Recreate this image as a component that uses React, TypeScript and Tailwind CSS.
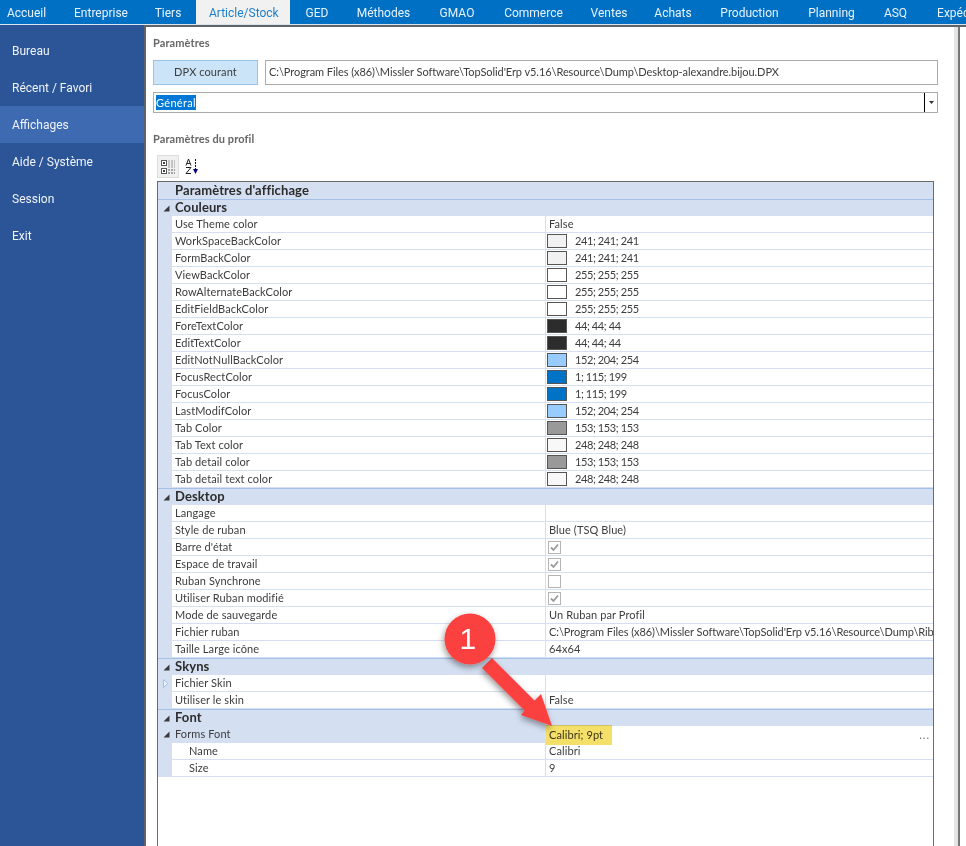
const tabs = [
  { label: 'Accueil', width: 'w-[39px]' },
  { label: 'Entreprise', width: 'w-[52px]' },
  { label: 'Tiers', width: 'w-[24px]' },
  { label: 'Article/Stock', width: 'w-[68px]', active: true },
  { label: 'GED', width: 'w-[22px]' },
  { label: 'Méthodes', width: 'w-[53px]' },
  { label: 'GMAO', width: 'w-[36px]' },
  { label: 'Commerce', width: 'w-[59px]' },
  { label: 'Ventes', width: 'w-[34px]' },
  { label: 'Achats', width: 'w-[36px]' },
  { label: 'Production', width: 'w-[59px]' },
  { label: 'Planning', width: 'w-[47px]' },
  { label: 'ASQ', width: 'w-[23px]' },
  { label: 'Expédition', width: 'w-[58px]' },
];
const menu = ['Bureau', 'Récent / Favori', 'Affichages', 'Aide / Système', 'Session', 'Exit'];

type Row =
  | { kind: 'group'; label: string; line?: boolean }
  | { kind: 'text'; label: string; value?: string; indent?: boolean; marker?: boolean; tight?: boolean }
  | { kind: 'color'; label: string; value: string; swatch: string }
  | { kind: 'check'; label: string; checked: boolean }
  | { kind: 'font'; label: string; value: string };

const rows: Row[] = [
  { kind: 'group', label: "Paramètres d'affichage" },
  { kind: 'group', label: 'Couleurs', line: true },
  { kind: 'text', label: 'Use Theme color', value: 'False' },
  { kind: 'color', label: 'WorkSpaceBackColor', value: '241; 241; 241', swatch: 'bg-[#f1f1f1]' },
  { kind: 'color', label: 'FormBackColor', value: '241; 241; 241', swatch: 'bg-[#f1f1f1]' },
  { kind: 'color', label: 'ViewBackColor', value: '255; 255; 255', swatch: 'bg-white' },
  { kind: 'color', label: 'RowAlternateBackColor', value: '255; 255; 255', swatch: 'bg-white' },
  { kind: 'color', label: 'EditFieldBackColor', value: '255; 255; 255', swatch: 'bg-white' },
  { kind: 'color', label: 'ForeTextColor', value: '44; 44; 44', swatch: 'bg-[#2c2c2c]' },
  { kind: 'color', label: 'EditTextColor', value: '44; 44; 44', swatch: 'bg-[#2c2c2c]' },
  { kind: 'color', label: 'EditNotNullBackColor', value: '152; 204; 254', swatch: 'bg-[#98ccfe]' },
  { kind: 'color', label: 'FocusRectColor', value: '1; 115; 199', swatch: 'bg-[#0173c7]' },
  { kind: 'color', label: 'FocusColor', value: '1; 115; 199', swatch: 'bg-[#0173c7]' },
  { kind: 'color', label: 'LastModifColor', value: '152; 204; 254', swatch: 'bg-[#98ccfe]' },
  { kind: 'color', label: 'Tab Color', value: '153; 153; 153', swatch: 'bg-[#999999]' },
  { kind: 'color', label: 'Tab Text color', value: '248; 248; 248', swatch: 'bg-[#f8f8f8]' },
  { kind: 'color', label: 'Tab detail color', value: '153; 153; 153', swatch: 'bg-[#999999]' },
  { kind: 'color', label: 'Tab detail text color', value: '248; 248; 248', swatch: 'bg-[#f8f8f8]' },
  { kind: 'group', label: 'Desktop', line: true },
  { kind: 'text', label: 'Langage' },
  { kind: 'text', label: 'Style de ruban', value: 'Blue (TSQ Blue)' },
  { kind: 'check', label: "Barre d'état", checked: true },
  { kind: 'check', label: 'Espace de travail', checked: true },
  { kind: 'check', label: 'Ruban Synchrone', checked: false },
  { kind: 'check', label: 'Utiliser Ruban modifié', checked: true },
  { kind: 'text', label: 'Mode de sauvegarde', value: 'Un Ruban par Profil' },
  { kind: 'text', label: 'Fichier ruban', tight: true, value: "C:\\Program Files (x86)\\Missler Software\\TopSolid'Erp v5.16\\Resource\\Dump\\Ribbon-alexandre.bijou.xml" },
  { kind: 'text', label: 'Taille Large icône', value: '64x64' },
  { kind: 'group', label: 'Skyns', line: true },
  { kind: 'text', label: 'Fichier Skin', marker: true },
  { kind: 'text', label: 'Utiliser le skin', value: 'False' },
  { kind: 'group', label: 'Font', line: true },
  { kind: 'font', label: 'Forms Font', value: 'Calibri; 9pt' },
  { kind: 'text', label: 'Name', value: 'Calibri', indent: true },
  { kind: 'text', label: 'Size', value: '9', indent: true },
];

function Expander() {
  return (
    <svg width="7" height="7" viewBox="0 0 7 7" className="absolute left-[5px] top-[5px]">
      <path d="M6.5 0.5V6.5H0.5Z" fill="#3a3a3a" />
    </svg>
  );
}

function Check({ checked }: { checked: boolean }) {
  return (
    <div className="ml-[-1px] w-[13px] h-[13px] border border-[#b4b4b4] bg-white flex items-center justify-center">
      {checked && (
        <svg width="11" height="11" viewBox="0 0 11 11">
          <path d="M2 5.5L4.5 8L9 2.5" fill="none" stroke="#9a9a9a" strokeWidth="1.8" />
        </svg>
      )}
    </div>
  );
}

function GridRow({ row }: { row: Row }) {
  if (row.kind === 'group') {
    return (
      <div className={`relative h-[17px] shrink-0 bg-[#d4dff1] pl-[17px] font-bold text-[13px] text-[#2c2c2c] ${row.line ? 'border-t border-[#a5c0e6] leading-[15px]' : 'leading-[16px]'}`}>
        {row.line && <Expander />}
        {row.label}
      </div>
    );
  }
  const isFont = row.kind === 'font';
  return (
    <div className="flex h-[17px] shrink-0">
      <div className="relative w-[14px] shrink-0 bg-[#d4dff1]">
        {isFont && <Expander />}
        {row.kind === 'text' && row.marker && (
          <svg width="6" height="9" viewBox="0 0 6 9" className="absolute left-[5px] top-[4px]">
            <path d="M0.5 0.5L5 4.5L0.5 8.5Z" fill="#eaf2fd" stroke="#a5c0e6" />
          </svg>
        )}
      </div>
      <div className={`w-[374px] shrink-0 border-r border-[#d4dff1] leading-[16px] ${isFont ? 'bg-[#d4dff1]' : 'bg-white border-b'} ${row.kind === 'text' && row.indent ? 'pl-[17px]' : 'pl-[3px]'}`}>
        {row.label}
      </div>
      <div className={`relative flex-1 min-w-0 pl-[3px] leading-[16px] whitespace-nowrap overflow-hidden flex items-center ${isFont ? '' : 'border-b border-[#d4dff1]'}`}>
        {row.kind === 'color' && (
          <>
            <div className={`w-[20px] h-[14px] border border-[#555555] ml-[-2px] mr-[8px] shrink-0 ${row.swatch}`} />
            <span className="tracking-[-0.4px]">{row.value}</span>
          </>
        )}
        {row.kind === 'check' && <Check checked={row.checked} />}
        {row.kind === 'text' && <span className={row.tight ? 'tracking-[-0.07px]' : ''}>{row.value}</span>}
        {row.kind === 'font' && (
          <>
            {row.value}
            <span className="absolute right-[3px] top-[1px] text-[#777777] tracking-[1px] leading-[16px]">...</span>
          </>
        )}
      </div>
    </div>
  );
}

function Callout() {
  return (
    <>
      <div className="absolute left-[546px] top-[725px] w-[66px] h-[20px] bg-[#f4df68] mix-blend-multiply" />
      <svg width="966" height="846" viewBox="0 0 966 846" className="absolute left-0 top-0 pointer-events-none">
        <defs>
          <filter id="shadow" x="-30%" y="-30%" width="160%" height="160%">
            <feDropShadow dx="-1" dy="3" stdDeviation="3" floodColor="#000" floodOpacity="0.4" />
          </filter>
        </defs>
        <path d="M492 658L534.5 700.5L541 694L552 726L521 715L524.5 710.5L482 668Z" fill="#fb4141" filter="url(#shadow)" />
        <circle cx="470" cy="639" r="25.5" fill="#fb4141" filter="url(#shadow)" />
      </svg>
      <div className="absolute left-[438px] top-[613px] w-[60px] h-[50px] flex items-center justify-center text-white text-[30px] font-['Liberation_Sans',sans-serif]">1</div>
    </>
  );
}

export default function App() {
  return (
    <div className="relative w-[966px] h-[846px] overflow-hidden bg-white flex flex-col font-['Lato',sans-serif] text-[11px] tracking-[0.1px] text-[#3c3c3c]">
      <div className="flex h-[25px] shrink-0 bg-[#0070c5] border-b border-[#d8e4f0] pl-[7px] gap-[29px] text-[#e8f2fb] text-[12px] tracking-normal font-['Roboto',sans-serif] leading-[27px] whitespace-nowrap">
        {tabs.map((t) =>
          t.active ? (
            <div key={t.label} className={`${t.width} box-content shrink-0 bg-[#f1f1f1] text-[#1f7fc9] text-center px-[13px] mx-[-13px]`}>{t.label}</div>
          ) : (
            <div key={t.label} className={`${t.width} shrink-0 flex justify-center`}>{t.label}</div>
          ),
        )}
      </div>
      <div className="flex flex-1 min-h-0">
        <div className="w-[144px] shrink-0 bg-[#2b5597] pt-[7px] flex flex-col text-[#f0f4fa] text-[12px] tracking-normal font-['Roboto',sans-serif]">
          {menu.map((m) => (
            <div key={m} className={`h-[37px] pl-[12px] leading-[39px] ${m === 'Affichages' ? 'bg-[#3d6ab0]' : ''}`}>{m}</div>
          ))}
        </div>
        <div className="flex-1 min-w-0 flex border-l-2 border-t-2 border-[#5f6368]">
          <div className="flex-1 min-w-0 pl-[7px] pr-[16px] flex flex-col">
            <div className="mt-[8px] font-bold text-[#666666] leading-[16px]">Paramètres</div>
            <div className="mt-[9px] flex h-[25px] shrink-0 gap-[7px]">
              <div className="w-[105px] border border-[#9cc3e6] bg-[#cce4f7] flex items-center justify-center">DPX courant</div>
              <div className="flex-1 border border-[#ababab] flex items-center pl-[3px] whitespace-nowrap tracking-[-0.07px]">C:\Program Files (x86)\Missler Software\TopSolid'Erp v5.16\Resource\Dump\Desktop-alexandre.bijou.DPX</div>
            </div>
            <div className="mt-[7px] flex items-center h-[21px] shrink-0 border border-[#ababab] pl-[2px]">
              <span className="bg-[#0078d7] text-white leading-[15px] tracking-[0.3px]">Général</span>
              <div className="ml-auto w-[13px] h-full border-l border-black flex items-center justify-center">
                <svg width="5" height="3" viewBox="0 0 5 3"><path d="M0 0H5L2.5 3Z" fill="#333" /></svg>
              </div>
            </div>
            <div className="mt-[18px] font-bold text-[#666666] leading-[16px]">Paramètres du profil</div>
            <div className="mt-[8px] ml-[4px] flex items-center h-[23px] shrink-0 gap-[6px]">
              <div className="w-[22px] h-[23px] bg-[#f0f0f0] border border-[#dddddd] flex items-center justify-center">
                <svg width="16" height="16" viewBox="0 0 16 16">
                  <rect x="1.5" y="1.5" width="5" height="5" fill="#fff" stroke="#555" />
                  <path d="M3 4H5M4 3V5" stroke="#000" />
                  <rect x="1.5" y="9.5" width="5" height="5" fill="#fff" stroke="#555" />
                  <path d="M3 12H5M4 11V13" stroke="#000" />
                  <path d="M8 2H15M8 4H15M8 6H15M8 8H15" stroke="#999" strokeDasharray="2 1" />
                  <path d="M8 11H15M8 14H15" stroke="#555" strokeDasharray="2 1" />
                </svg>
              </div>
              <svg width="16" height="18" viewBox="0 0 16 18">
                <path d="M1 7.5L3.5 1L6 7.5M1.8 5.5H5.2" fill="none" stroke="#222" />
                <path d="M1 9.5H6L1 15.5H6" fill="none" stroke="#222" />
                <path d="M10.5 1V13" stroke="#000080" strokeDasharray="2 1" />
                <path d="M8 11H13L10.5 16Z" fill="#000080" />
              </svg>
            </div>
            <div className="mt-[3px] ml-[4px] flex-1 min-h-0 w-[777px] border-l border-t border-r border-[#6b6b6b] flex flex-col">
              {rows.map((r) => (
                <GridRow key={r.label} row={r} />
              ))}
            </div>
          </div>
          <div className="w-[4px] bg-[#e4e4e4]" />
          <div className="w-[2px] bg-[#777777] mr-[6px]" />
        </div>
      </div>
      <Callout />
    </div>
  );
}
